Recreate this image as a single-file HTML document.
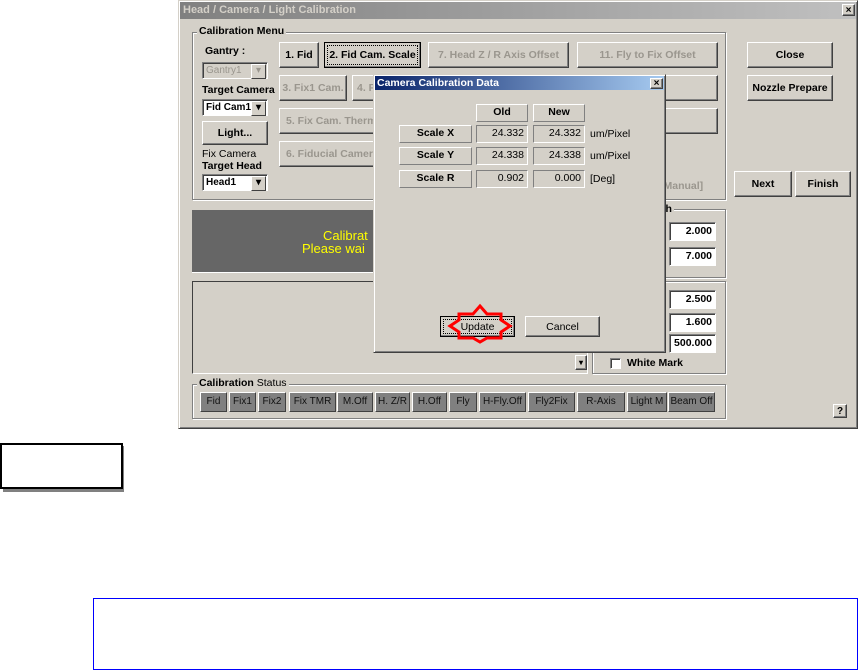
<!DOCTYPE html>
<html><head><meta charset="utf-8"><style>
*{box-sizing:border-box;margin:0;padding:0}
body{width:858px;height:670px;background:#fff;position:relative;overflow:hidden;font-family:"Liberation Sans",sans-serif;font-size:10.5px;font-weight:bold;color:#000}
.a{position:absolute}
.win{left:178px;top:0;width:680px;height:429px;background:#d4d0c8;border:1px solid #404040;border-top-color:#d4d0c8;border-left-color:#d4d0c8;box-shadow:inset 1px 1px #fff,inset -1px -1px #808080}
.btn{position:absolute;background:#d4d0c8;border:1px solid;border-color:#fff #404040 #404040 #fff;box-shadow:inset -1px -1px #808080;display:flex;align-items:center;justify-content:center;white-space:nowrap;overflow:hidden}
.dis{color:#9a968e}
.grp{position:absolute;border:1px solid #808080;box-shadow:1px 1px #fff, inset 1px 1px #fff}
.lbl{position:absolute;background:#d4d0c8;padding:0 2px;white-space:nowrap}
.combo{position:absolute;background:#fff;border:1px solid;border-color:#808080 #fff #fff #808080;box-shadow:inset 1px 1px #404040;padding-left:3px;line-height:15px;font-size:10px;white-space:nowrap}
.combo:after{content:"▾";position:absolute;right:1px;top:1px;width:13px;height:13px;background:#d4d0c8;border:1px solid;border-color:#fff #404040 #404040 #fff;font-size:10px;line-height:11px;text-align:center}
.inp{position:absolute;background:#fff;border:1px solid;border-color:#808080 #fff #fff #808080;box-shadow:inset 1px 1px #404040;text-align:right;padding-right:3px;line-height:16px}
.cell{position:absolute;border:1px solid;border-color:#808080 #fff #fff #808080;text-align:right;padding-right:3px;line-height:15px;font-weight:normal}
.hd{position:absolute;border:1px solid;border-color:#fff #808080 #808080 #fff;text-align:center;line-height:15px}
.st{position:absolute;top:392px;height:20px;background:#808080;border:1px solid;border-color:#fff #404040 #404040 #fff;color:#111;text-align:center;line-height:18px;font-weight:normal;font-size:10px;white-space:nowrap;overflow:hidden}
</style></head><body>
<div class="a win"></div>
<div class="a" style="left:180px;top:2px;width:676px;height:17px;background:linear-gradient(90deg,#808080,#c0c0c0);color:#d4d0c8;padding-left:3px;line-height:17px;font-size:11px">Head / Camera / Light Calibration</div>
<div class="btn" style="left:842px;top:4px;width:13px;height:12px;font-size:10px">×</div>

<div class="grp" style="left:192px;top:32px;width:534px;height:168px"></div>
<div class="lbl" style="left:197px;top:25px">Calibration Menu</div>
<div class="a" style="left:205px;top:45px">Gantry :</div>
<div class="combo dis" style="left:202px;top:62px;width:66px;height:17px;background:#d4d0c8;font-weight:normal">Gantry1</div>
<div class="a" style="left:202px;top:84px">Target Camera</div>
<div class="combo" style="left:202px;top:99px;width:66px;height:17px">Fid Cam1</div>
<div class="btn" style="left:202px;top:121px;width:66px;height:24px">Light...</div>
<div class="a" style="left:202px;top:148px;font-weight:normal">Fix Camera</div>
<div class="a" style="left:202px;top:160px">Target Head</div>
<div class="combo" style="left:202px;top:174px;width:66px;height:17px">Head1</div>

<div class="btn" style="left:279px;top:42px;width:40px;height:26px">1. Fid</div>
<div class="btn" style="left:324px;top:42px;width:97px;height:26px;border:1px solid #000;outline:1px dotted #000;outline-offset:-4px">2. Fid Cam. Scale</div>
<div class="btn dis" style="left:428px;top:42px;width:141px;height:26px">7. Head Z / R Axis Offset</div>
<div class="btn dis" style="left:577px;top:42px;width:141px;height:26px">11. Fly to Fix Offset</div>
<div class="btn dis" style="left:279px;top:75px;width:68px;height:26px">3. Fix1 Cam.</div>
<div class="btn dis" style="left:352px;top:75px;width:366px;height:26px;justify-content:flex-start;padding-left:4px">4. F</div>
<div class="btn dis" style="left:279px;top:108px;width:439px;height:26px;justify-content:flex-start;padding-left:6px">5. Fix Cam. Therm</div>
<div class="btn dis" style="left:279px;top:141px;width:300px;height:26px;justify-content:flex-start;padding-left:6px">6. Fiducial Camera</div>
<div class="a dis" style="left:660px;top:180px">[Manual]</div>

<div class="btn" style="left:747px;top:42px;width:86px;height:26px">Close</div>
<div class="btn" style="left:747px;top:75px;width:86px;height:26px">Nozzle Prepare</div>
<div class="btn" style="left:734px;top:171px;width:58px;height:26px">Next</div>
<div class="btn" style="left:795px;top:171px;width:56px;height:26px">Finish</div>

<div class="a" style="left:192px;top:210px;width:200px;height:63px;background:#666;border-bottom:1px solid #fff;color:#ff0;font-weight:normal;font-size:13px"><div class="a" style="left:131px;top:18px">Calibrat</div><div class="a" style="left:110px;top:31px">Please wai</div></div>
<div class="a" style="left:192px;top:281px;width:396px;height:93px;border:1px solid;border-color:#404040 #fff #fff #404040"></div>
<div class="btn" style="left:575px;top:355px;width:12px;height:15px;font-size:8px">▾</div>

<div class="grp" style="left:592px;top:209px;width:134px;height:69px"></div>
<div class="lbl" style="left:660px;top:203px">th</div>
<div class="inp" style="left:669px;top:222px;width:47px;height:19px">2.000</div>
<div class="inp" style="left:669px;top:247px;width:47px;height:19px">7.000</div>
<div class="grp" style="left:592px;top:281px;width:134px;height:93px"></div>
<div class="inp" style="left:669px;top:290px;width:47px;height:19px">2.500</div>
<div class="inp" style="left:669px;top:313px;width:47px;height:19px">1.600</div>
<div class="inp" style="left:669px;top:334px;width:47px;height:19px">500.000</div>
<div class="a" style="left:610px;top:358px;width:11px;height:11px;background:#fff;border:1px solid;border-color:#808080 #fff #fff #808080;box-shadow:inset 1px 1px #404040"></div>
<div class="a" style="left:627px;top:357px">White Mark</div>

<div class="grp" style="left:192px;top:384px;width:534px;height:35px"></div>
<div class="lbl" style="left:197px;top:377px">Calibration <span style="font-weight:normal">Status</span></div>
<div class="st" style="left:200px;width:27px">Fid</div>
<div class="st" style="left:229px;width:27px">Fix1</div>
<div class="st" style="left:258px;width:28px">Fix2</div>
<div class="st" style="left:289px;width:47px">Fix TMR</div>
<div class="st" style="left:337px;width:36px">M.Off</div>
<div class="st" style="left:375px;width:35px">H. Z/R</div>
<div class="st" style="left:412px;width:35px">H.Off</div>
<div class="st" style="left:449px;width:28px">Fly</div>
<div class="st" style="left:479px;width:47px">H-Fly.Off</div>
<div class="st" style="left:528px;width:47px">Fly2Fix</div>
<div class="st" style="left:577px;width:48px">R-Axis</div>
<div class="st" style="left:627px;width:40px">Light M</div>
<div class="st" style="left:668px;width:47px">Beam Off</div>
<div class="btn" style="left:833px;top:404px;width:14px;height:14px;font-size:10px">?</div>

<div class="a" style="left:373px;top:74px;width:293px;height:279px;background:#d4d0c8;border:1px solid;border-color:#d4d0c8 #404040 #404040 #d4d0c8;box-shadow:inset 1px 1px #fff,inset -1px -1px #808080"></div>
<div class="a" style="left:375px;top:76px;width:289px;height:14px;background:linear-gradient(90deg,#0a246a,#a6caf0);color:#fff;line-height:14px;padding-left:2px">Camera Calibration Data</div>
<div class="btn" style="left:650px;top:78px;width:13px;height:11px;font-size:10px">×</div>
<div class="hd" style="left:476px;top:104px;width:52px;height:18px">Old</div>
<div class="hd" style="left:533px;top:104px;width:52px;height:18px">New</div>
<div class="hd" style="left:399px;top:125px;width:73px;height:18px">Scale X</div>
<div class="hd" style="left:399px;top:147px;width:73px;height:18px">Scale Y</div>
<div class="hd" style="left:399px;top:170px;width:73px;height:18px">Scale R</div>
<div class="cell" style="left:476px;top:125px;width:52px;height:18px">24.332</div>
<div class="cell" style="left:533px;top:125px;width:52px;height:18px">24.332</div>
<div class="cell" style="left:476px;top:147px;width:52px;height:18px">24.338</div>
<div class="cell" style="left:533px;top:147px;width:52px;height:18px">24.338</div>
<div class="cell" style="left:476px;top:170px;width:52px;height:18px">0.902</div>
<div class="cell" style="left:533px;top:170px;width:52px;height:18px">0.000</div>
<div class="a" style="left:590px;top:128px;font-weight:normal">um/Pixel</div>
<div class="a" style="left:590px;top:150px;font-weight:normal">um/Pixel</div>
<div class="a" style="left:590px;top:173px;font-weight:normal">[Deg]</div>
<div class="btn" style="left:440px;top:316px;width:75px;height:21px;border:1px solid #000;outline:1px dotted #000;outline-offset:-4px;font-weight:normal">Update</div>
<div class="btn" style="left:525px;top:316px;width:75px;height:21px;font-weight:normal">Cancel</div>
<svg class="a" style="left:446px;top:303px" width="70" height="42"><polygon points="34,3 41,11 55,11 55,17 64,23 55,29 55,35 41,35 34,39 27,35 13,35 13,29 4,23 13,17 13,11 27,11" fill="none" stroke="#f00" stroke-width="3"/></svg>

<div class="a" style="left:3px;top:446px;width:121px;height:46px;background:#808080"></div>
<div class="a" style="left:0;top:443px;width:123px;height:46px;background:#fff;border:2px solid #000"></div>
<div class="a" style="left:93px;top:598px;width:765px;height:72px;border:1px solid #00f"></div>
</body></html>
